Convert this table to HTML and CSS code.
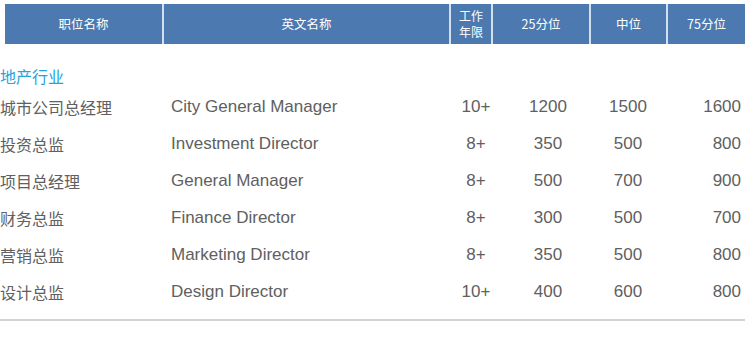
FILE: index.html
```html
<!DOCTYPE html>
<html lang="zh-CN">
<head>
<meta charset="utf-8">
<title>职位薪酬</title>
<link rel="stylesheet" href="styles.css">
</head>
<body>
<div class="head">
  <div class="hcell">职位名称</div>
  <div class="hcell">英文名称</div>
  <div class="hcell two"><span>工作</span><span>年限</span></div>
  <div class="hcell">25分位</div>
  <div class="hcell">中位</div>
  <div class="hcell">75分位</div>
</div>
<div class="cat">地产行业</div>
<div class="rows">
  <div class="row"><span class="cn">城市公司总经理</span><span class="en">City General Manager</span><span class="num yr">10+</span><span class="num p25">1200</span><span class="num mid">1500</span><span class="num p75">1600</span></div>
  <div class="row"><span class="cn">投资总监</span><span class="en">Investment Director</span><span class="num yr">8+</span><span class="num p25">350</span><span class="num mid">500</span><span class="num p75">800</span></div>
  <div class="row"><span class="cn">项目总经理</span><span class="en">General Manager</span><span class="num yr">8+</span><span class="num p25">500</span><span class="num mid">700</span><span class="num p75">900</span></div>
  <div class="row"><span class="cn">财务总监</span><span class="en">Finance Director</span><span class="num yr">8+</span><span class="num p25">300</span><span class="num mid">500</span><span class="num p75">700</span></div>
  <div class="row"><span class="cn">营销总监</span><span class="en">Marketing Director</span><span class="num yr">8+</span><span class="num p25">350</span><span class="num mid">500</span><span class="num p75">800</span></div>
  <div class="row"><span class="cn">设计总监</span><span class="en">Design Director</span><span class="num yr">10+</span><span class="num p25">400</span><span class="num mid">600</span><span class="num p75">800</span></div>
</div>
<div class="rule"></div>
</body>
</html>
```
FILE: styles.css
```css
html, body {
  margin: 0;
  padding: 0;
  background: #ffffff;
}
body {
  font-family: "Liberation Sans", "Noto Sans CJK SC", sans-serif;
  color: #606060;
  width: 750px;
  overflow: hidden;
}
.head {
  margin: 4px 0 0 5px;
  width: 740px;
  height: 40px;
  display: grid;
  grid-template-columns: 157px 285px 40px 96px 75px 77px;
  column-gap: 2px;
  background: #d3dfec;
}
.hcell {
  background: #4b79b0;
  color: #ffffff;
  font-family: "Noto Sans CJK SC", "Liberation Sans", sans-serif;
  font-size: 12.5px;
  display: flex;
  align-items: center;
  justify-content: center;
  text-align: center;
  line-height: 18px;
}
.hcell.two {
  flex-direction: column;
  gap: 0;
}
.hcell.two span {
  display: block;
  height: 16px;
  line-height: 16px;
  font-size: 12px;
}
.cat {
  margin-top: 20px;
  height: 24px;
  line-height: 24px;
  font-family: "Noto Sans CJK SC", sans-serif;
  font-size: 16px;
  color: #27a3dc;
}
.rows {
  width: 741px;
}
.row {
  display: grid;
  grid-template-columns: 171px 279px 52px 92px 68px 79px;
  height: 37px;
  align-items: center;
}
.cn {
  font-family: "Noto Sans CJK SC", sans-serif;
  font-size: 16px;
  white-space: nowrap;
}
.en, .num {
  font-family: "Liberation Sans", sans-serif;
  font-size: 17px;
  white-space: nowrap;
}
.num {
  text-align: center;
}
.num.p75 {
  text-align: right;
}
.rule {
  margin-top: 9px;
  width: 745px;
  height: 2px;
  background: #d2d2d2;
}
```
